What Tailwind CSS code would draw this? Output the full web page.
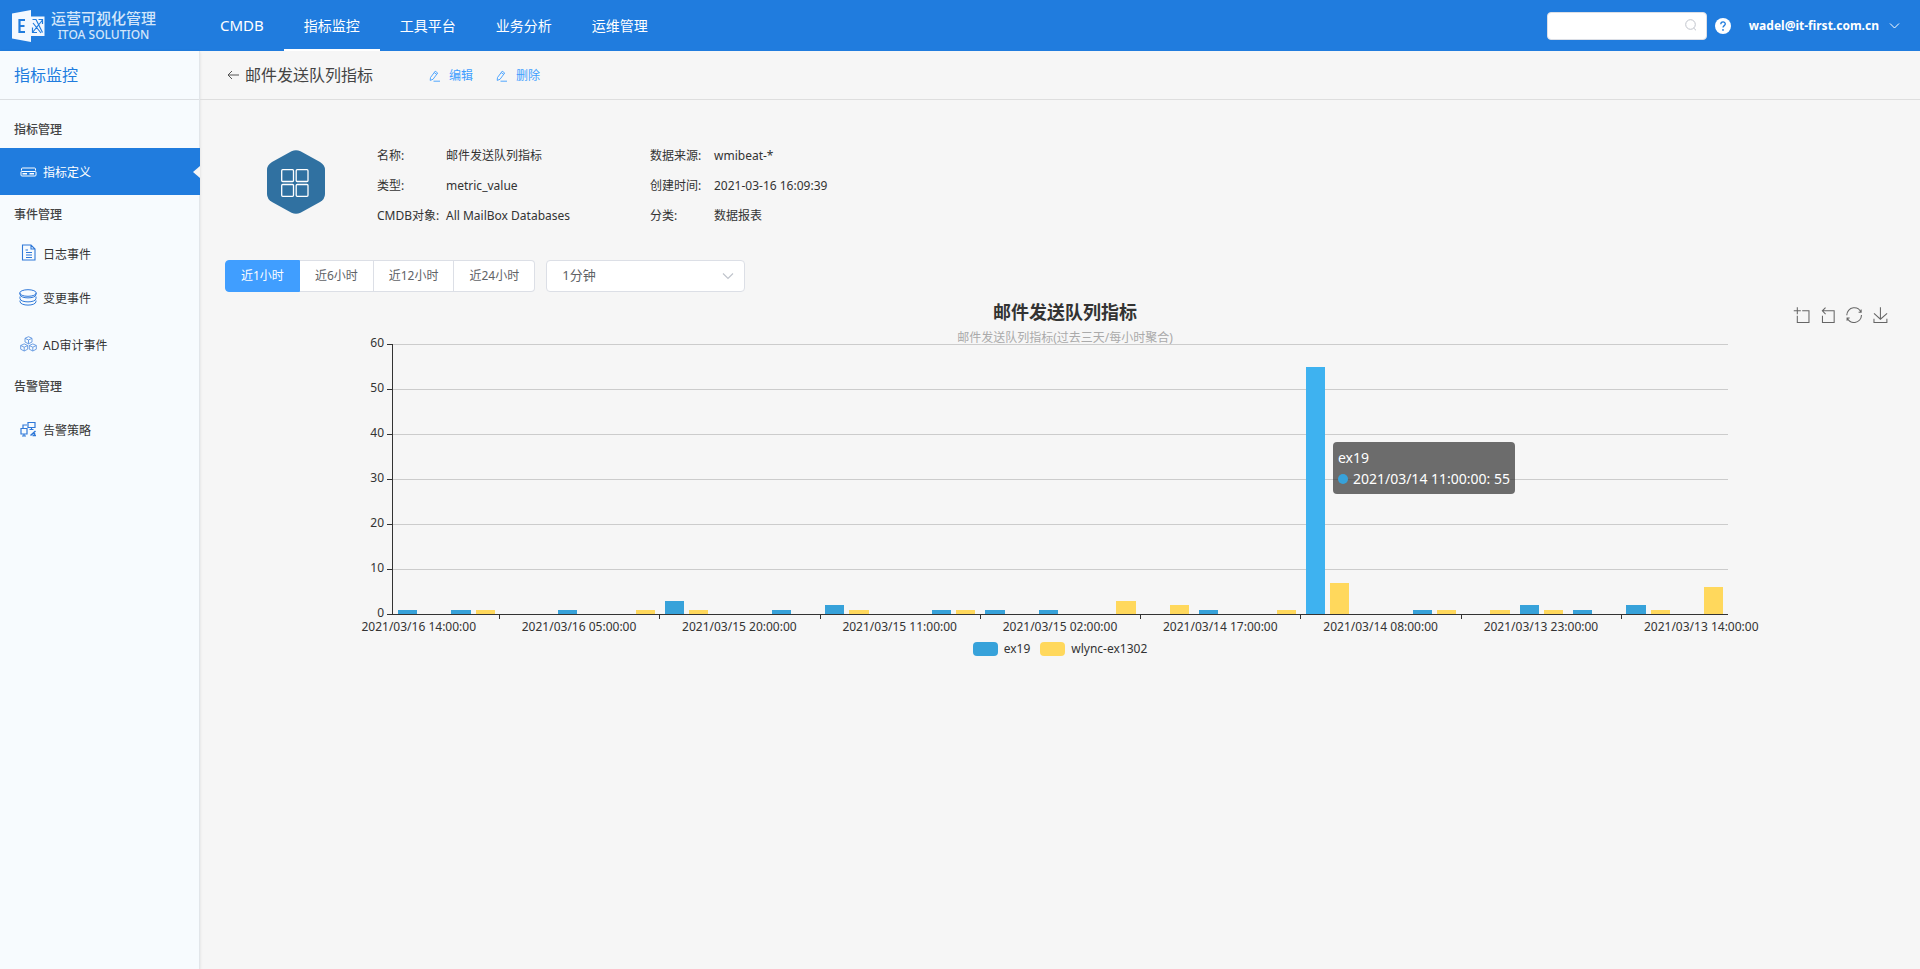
<!DOCTYPE html>
<html lang="zh-CN">
<head>
<meta charset="utf-8">
<title>运营可视化管理</title>
<script src="https://cdn.jsdelivr.net/npm/@tailwindcss/browser@4"></script>
</head>
<body class="min-h-screen flex flex-col bg-[#f6f6f6] text-xs text-[#333] font-['Noto_Sans','Noto_Sans_CJK_SC',sans-serif]">

<header class="h-[51px] shrink-0 flex items-center bg-[#207cde] text-white">
  <a href="#" class="w-[200px] h-full flex items-center gap-[6px] pl-3 text-[#d3e6fa]">
    <svg class="w-[33px] h-8" viewBox="0 0 33 32" fill="none">
      <path d="M0 3.500 19 0V32L0 28.500Z" fill="#f2f8ff"/>
      <path d="M13 10H7.500V22H13M7.500 16H12.500" stroke="#207cde" stroke-width="2.200"/>
      <path d="M19 6.500H32.500V26H19" fill="#f2f8ff"/>
      <path d="M20.500 9.500H24L30.500 22.500M30.500 10 20.500 22.500M26.500 9.500H30.500V14M20.500 17.500V22.500H25M21 13 29 23" stroke="#207cde" stroke-width="1.200"/>
    </svg>
    <span class="flex flex-col items-center">
      <span class="text-[15px] leading-4 font-medium">运营可视化管理</span>
      <span class="text-xs leading-3 pt-[3px] font-medium">ITOA SOLUTION</span>
    </span>
  </a>
  <nav class="h-full flex text-sm">
    <a href="#" class="px-5 flex items-center text-[15px]">CMDB</a>
    <a href="#" class="px-5 flex items-center border-y-2 border-t-transparent border-b-white">指标监控</a>
    <a href="#" class="px-5 flex items-center">工具平台</a>
    <a href="#" class="px-5 flex items-center">业务分析</a>
    <a href="#" class="px-5 flex items-center">运维管理</a>
  </nav>
  <div class="ml-auto flex items-center pr-5">
    <div class="relative">
      <input type="search" aria-label="搜索" class="block w-40 h-7 rounded bg-white border border-[#dcdfe6] pl-3 pr-8 text-[#606266] outline-none">
      <svg class="absolute right-[10px] top-[7px] size-3" viewBox="0 0 12 12" fill="none" stroke="#c0c4cc"><circle cx="5.500" cy="5.500" r="4.800"/><path d="M8.800 9.200 11 11.300"/></svg>
    </div>
    <button aria-label="帮助" class="ml-2">
      <svg class="block size-4" viewBox="0 0 16 16"><circle cx="8" cy="8" r="8" fill="#fff"/><path d="M5.800 6.300C5.800 3.200 10.300 3.300 10.300 6 10.300 7.600 8 7.700 8 9.600" fill="none" stroke="#207cde" stroke-width="1.300"/><circle cx="8" cy="11.900" r=".9" fill="#207cde"/></svg>
    </button>
    <button class="ml-[18px] flex items-center gap-[10px] text-xs font-bold">wadel@it-first.com.cn
      <svg class="w-[11px] h-2" viewBox="0 0 11 8" fill="none" stroke="#fff"><path d="M1 1.500 5.500 6 10 1.500"/></svg>
    </button>
  </div>
</header>

<div class="flex-1 flex">
  <aside class="w-[200px] shrink-0 bg-[#f7fbfe] border-r border-[#e2e6ea] shadow-sm">
    <h2 class="h-[49px] flex items-center pl-[14px] text-base text-[#207cde] border-b border-[#dcdfe2]">指标监控</h2>
    <h3 class="mt-[10px] h-[38px] pt-[2px] flex items-center pl-[14px] text-[#444] font-medium">指标管理</h3>
    <a href="#" class="relative -mr-px h-[47px] flex items-center gap-[6px] pl-5 bg-[#207cde] text-white">
      <svg class="w-[17px] h-4" viewBox="0 0 17 16" fill="none" stroke="#fff"><path d="M1.500 6.500V5Q1.500 4 2.500 4H14.500Q15.500 4 15.500 5V6.500M1.500 7.500H15.500Q16 7.500 16 8V11Q16 12 15 12H2Q1 12 1 11V8Q1 7.500 1.500 7.500Z"/><path d="M2.500 9.800H7M9.500 9.800H14" stroke-width="1.500"/></svg>
      <span class="pt-[3px]">指标定义</span>
      <svg class="absolute right-0 top-[18px] w-[7px] h-3" viewBox="0 0 7 12"><path d="M7 0V12L0 6Z" fill="#f6f6f6"/></svg>
    </a>
    <h3 class="h-[39px] flex items-center pl-[14px] text-[#444] font-medium">事件管理</h3>
    <a href="#" class="h-10 flex items-center gap-[6px] pl-5">
      <svg class="w-[17px] h-5 pb-[3px]" viewBox="0 0 17 17" fill="none" stroke="#2f78d8" stroke-width="1.100"><path d="M2.500 1H11L15 5V16H2.500ZM11 1V5H15M6 8.500H12M6 11H12M6 13.500H12M5.500 6H8"/></svg>
      <span class="pt-px">日志事件</span>
    </a>
    <a href="#" class="mt-1 h-[42px] flex items-center gap-[6px] pl-5">
      <svg class="-ml-px w-[18px] h-5 pb-[3px]" viewBox="0 0 18 17" fill="none" stroke="#2f78d8"><ellipse cx="9" cy="4" rx="8.300" ry="3.300"/><path d="M1 4V5.500C1 10 17 10 17 5.500V4M1 7.500V9.500C1 14 17 14 17 9.500V7.500M1 11.500V12.500C1 17.300 17 17.300 17 12.500V11.500"/></svg>
      变更事件
    </a>
    <a href="#" class="mt-1 h-[43px] flex items-center gap-[6px] pl-5">
      <svg class="w-[17px] h-5 pb-1" viewBox="0 0 17 16" fill="none" stroke="#5f95e0" stroke-width=".9"><path id="cube" d="M8.500.7 12 2.300V6L8.500 7.800 5 6V2.300ZM5 2.300 8.500 4 12 2.300M8.500 4V7.800"/><use href="#cube" x="-4.300" y="7.200"/><use href="#cube" x="4.300" y="7.200"/></svg>
      AD审计事件
    </a>
    <h3 class="h-[39px] flex items-center pl-[14px] text-[#444] font-medium">告警管理</h3>
    <a href="#" class="mt-1 h-[42px] flex items-center gap-[6px] pl-5">
      <svg class="w-[17px] h-5 pb-1" viewBox="0 0 17 16" fill="none" stroke="#2f78d8" stroke-width="1.200"><path d="M8 1.500H15V6.500H8ZM11.500 6.500V8.500M9.500 8.500H13.500M1 7.500H7V13H1ZM4 13V15M2 15H6M3 7V4H7"/><path d="M10.500 14.500 15.500 10M12.500 14.500H16M14.500 12V14.500" stroke-width="1.500"/></svg>
      告警策略
    </a>
  </aside>

  <main class="flex-1 min-w-0">
    <div class="h-[49px] flex items-center pl-[27px] border-b border-[#dedede]">
      <button aria-label="返回" class="mr-[6px]"><svg class="block w-3 h-3" viewBox="0 0 12 12" fill="none" stroke="#555"><path d="M1 6H12M5 2 1 6 5 10"/></svg></button>
      <h1 class="text-base text-[#444]">邮件发送队列指标</h1>
      <button class="ml-14 pt-[2px] flex items-center gap-2 text-[#409eff]">
        <svg class="w-3 h-3" viewBox="0 0 12 12" fill="none" stroke="#409eff" stroke-width=".9"><path d="M1.500 7.500 6.200 1.200 8.700 3 4 9.300 1.200 10.400ZM5.200 2.600 7.700 4.400M4.500 11.200H11"/></svg>编辑
      </button>
      <button class="ml-[23px] pt-[2px] flex items-center gap-2 text-[#409eff]">
        <svg class="w-3 h-3" viewBox="0 0 12 12" fill="none" stroke="#409eff" stroke-width=".9"><path d="M1.500 7.500 6.200 1.200 8.700 3 4 9.300 1.200 10.400ZM5.200 2.600 7.700 4.400M4.500 11.200H11"/></svg>删除
      </button>
    </div>

    <div class="px-[25px]">
      <section class="pt-[41px] pl-[41px] flex">
        <svg class="mt-[9px] w-[60px] h-16 mr-[51px]" viewBox="0 0 60 64" fill="none">
          <path d="M25.500 1.200Q30-.8 34.500 1.200L54 12Q59 15 59 20V44Q59 49 54 52L34.500 62.800Q30 64.800 25.500 62.800L6 52Q1 49 1 44V20Q1 15 6 12Z" fill="#3071a1"/>
          <g stroke="#fff" stroke-width="1.300"><rect x="15.700" y="19.700" width="11.800" height="11.800" rx="1"/><rect x="30.200" y="19.700" width="11.800" height="11.800" rx="1"/><rect x="15.700" y="34.500" width="11.800" height="11.800" rx="1"/><rect x="30.200" y="34.500" width="11.800" height="11.800" rx="1"/></g>
        </svg>
        <dl class="grid grid-cols-[69px_204px_64px_auto] auto-rows-[30px] items-center whitespace-nowrap">
          <dt>名称:</dt><dd>邮件发送队列指标</dd><dt>数据来源:</dt><dd>wmibeat-*</dd>
          <dt>类型:</dt><dd>metric_value</dd><dt>创建时间:</dt><dd>2021-03-16 16:09:39</dd>
          <dt>CMDB对象:</dt><dd>All MailBox Databases</dd><dt>分类:</dt><dd>数据报表</dd>
        </dl>
      </section>

      <div class="mt-[29px] flex gap-[11px]">
        <fieldset class="h-8 flex text-[#606266]">
          <label class="relative px-[15px] flex items-center rounded-l border border-[#dcdfe6] bg-white has-checked:bg-[#409eff] has-checked:border-[#409eff] has-checked:text-white"><input type="radio" name="range" class="sr-only" checked>近1小时</label>
          <label class="relative px-[15px] flex items-center border border-l-0 border-[#dcdfe6] bg-white"><input type="radio" name="range" class="sr-only">近6小时</label>
          <label class="relative px-[15px] flex items-center border border-l-0 border-[#dcdfe6] bg-white"><input type="radio" name="range" class="sr-only">近12小时</label>
          <label class="relative px-[15px] flex items-center rounded-r border border-l-0 border-[#dcdfe6] bg-white"><input type="radio" name="range" class="sr-only">近24小时</label>
        </fieldset>
        <div class="relative">
          <select aria-label="聚合间隔" class="block appearance-none w-[199px] h-8 rounded border border-[#dcdfe6] bg-white pl-[15px] text-[13px] text-[#606266] outline-none"><option>1分钟</option></select>
          <svg class="absolute right-[11px] top-3 w-3 h-2 pointer-events-none" viewBox="0 0 12 8" fill="none" stroke="#c0c4cc" stroke-width="1.200"><path d="M1 1.500 6 6.500 11 1.500"/></svg>
        </div>
      </div>

      <section class="relative mt-2">
        <div class="pl-[10px] text-center">
          <h2 class="text-lg leading-6 font-bold">邮件发送队列指标</h2>
          <p class="pt-1 h-5 leading-[19px] text-[#aaa]">邮件发送队列指标(过去三天/每小时聚合)</p>
        </div>
        <div class="absolute right-[6px] top-[7px] flex gap-[9px]">
          <button aria-label="区域缩放"><svg class="block w-[17px] h-4" viewBox="-1 -1 61 61" fill="none" stroke="#666" stroke-width="4"><path d="M0,13.500h26.900 M13.500,26.900V0 M32.100,13.500H58V58H13.500 V32.100"/></svg></button>
          <button aria-label="缩放还原"><svg class="block w-[17px] h-4" viewBox="-1 -1 61 61" fill="none" stroke="#666" stroke-width="4"><path d="M22,1.400L9.900,13.500l12.300,12.300 M10.300,13.500H54.900v44.600 H10.300v-26"/></svg></button>
          <button aria-label="刷新"><svg class="block w-[18px] h-4" viewBox="-1 -1 61 61" fill="none" stroke="#666" stroke-width="4"><path d="M47,18.900h9.800V8.700 M56.300,20.100 C52.100,9,40.500,0.600,26.800,2.100C12.600,3.700,1.600,16.200,2.100,30.600 M13,41.100H3.100v10.200 M3.700,39.900c4.200,11.100,15.800,19.500,29.500,18 c14.200-1.600,25.200-14.100,24.700-28.500"/></svg></button>
          <button aria-label="保存为图片"><svg class="block w-[17px] h-4" viewBox="-1 -1 61 61" fill="none" stroke="#666" stroke-width="4"><path d="M4.700,22.900L29.300,45.500L54.700,23.400M4.600,43.600L4.600,58L53.800,58L53.800,43.600M29.200,45.100L29.200,0"/></svg></button>
        </div>

        <div class="flex h-[271px]">
          <div class="w-[10%] -mt-[10px] h-72 pr-2 flex flex-col justify-between text-right leading-[18px]">
            <span>60</span><span>50</span><span>40</span><span>30</span><span>20</span><span>10</span><span>0</span>
          </div>
          <div class="relative flex-1 border-l border-b border-[#333]">
            <div id="grid" class="absolute inset-0 flex flex-col"></div>
            <div id="bars" class="absolute inset-0 flex"></div>
          </div>
          <div class="w-[10%]"></div>
        </div>
        <div id="dates" class="mx-[10%] h-6 flex leading-[24px]"></div>

        <div class="mt-[2px] flex justify-center gap-[10px]">
          <button class="flex items-center gap-[6px]"><span class="w-[25px] h-[14px] rounded bg-[#37a2da]"></span>ex19</button>
          <button class="flex items-center gap-[6px]"><span class="w-[25px] h-[14px] rounded bg-[#ffd85c]"></span>wlync-ex1302</button>
        </div>
      </section>
    </div>
  </main>
</div>

<script>
  // [ex19, wlync-ex1302] per hour bucket
  const data = [[1,0],[1,1],[0,0],[1,0],[0,1],[3,1],[0,0],[1,0],[2,1],[0,0],[1,1],[1,0],[1,0],
    [0,3],[0,2],[1,0],[0,1],[55,7],[0,0],[1,1],[0,1],[2,1],[1,0],[2,1],[0,6]];
  const dates = ['2021/03/16 14:00:00','2021/03/16 05:00:00','2021/03/15 20:00:00','2021/03/15 11:00:00',
    '2021/03/15 02:00:00','2021/03/14 17:00:00','2021/03/14 08:00:00','2021/03/13 23:00:00','2021/03/13 14:00:00'];
  const max = 60, hovered = 17;

  document.getElementById('grid').innerHTML = Array(6).fill(
    '<div class="relative flex-1 border-t border-[#ccc]"><i class="absolute -left-[6px] -top-px w-[6px] h-px bg-[#333]"></i></div>').join('') +
    '<i class="absolute -left-[6px] -bottom-px w-[6px] h-px bg-[#333]"></i>';

  const tip = '<div class="absolute left-8 top-[98px] z-10 p-[5px] rounded bg-[#323232]/70 text-white text-sm leading-[21px] whitespace-nowrap">' +
    'ex19<div class="flex items-center gap-[5px]"><i class="size-[10px] rounded-full bg-[#37a2da]"></i>2021/03/14 11:00:00: 55</div></div>';

  document.getElementById('bars').innerHTML = data.map(([a, b], i) =>
    '<div class="relative flex-1 min-w-0 flex items-end gap-[5px] px-[5px]">' +
    '<div class="flex-1 ' + (i === hovered ? 'bg-[#3eb2f0]' : 'bg-[#37a2da]') + '" style="height:' + a / max * 100 + '%"></div>' +
    '<div class="flex-1 bg-[#ffd85c]" style="height:' + b / max * 100 + '%"></div>' +
    (i === hovered ? tip : '') + '</div>').join('');

  // One label every three buckets, with a tick on the boundary between label groups
  document.getElementById('dates').innerHTML = data.map((_, i) =>
    '<div class="relative flex-1 min-w-0 flex justify-center whitespace-nowrap">' +
    (i % 3 === 0 ? '<span class="shrink-0">' + dates[i / 3] + '</span>' : '') +
    (i % 3 === 1 ? '<i class="absolute -right-px top-0 w-px h-1 bg-[#333]"></i>' : '') + '</div>').join('');
</script>
</body>
</html>
